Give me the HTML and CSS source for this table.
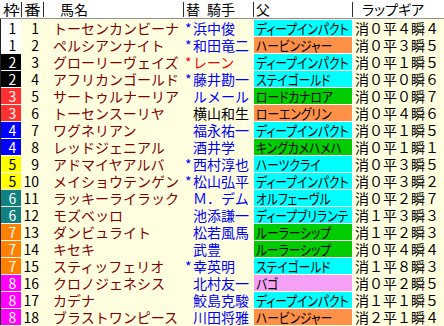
FILE: index.html
```html
<!DOCTYPE html>
<html lang="ja">
<head>
<meta charset="utf-8">
<link rel="stylesheet" href="styles.css">
</head>
<body>
<div class="table">
  <div class="head">
    <div class="h c-waku"><span class="wide">枠</span></div>
    <div class="h c-ban"><span class="wide">番</span></div>
    <div class="h c-name">馬名</div>
    <div class="h c-jockey"><span class="kae">替</span>騎手</div>
    <div class="h c-sire">父</div>
    <div class="h c-rap">ラップギア</div>
  </div>
  <div class="body">
    <div class="row"><div class="waku w1">1</div><div class="ban">1</div><div class="name">トーセンカンビーナ</div><div class="jockey"><span class="mark">*</span>浜中俊</div><div class="sire s-cyan"><span class="sq">ディープインパクト</span></div><div class="rap">消０平４瞬４</div></div>
    <div class="row"><div class="waku w1">1</div><div class="ban">2</div><div class="name">ペルシアンナイト</div><div class="jockey"><span class="mark">*</span>和田竜二</div><div class="sire s-orange"><span class="sq">ハービンジャー</span></div><div class="rap">消０平３瞬５</div></div>
    <div class="row"><div class="waku w2">2</div><div class="ban">3</div><div class="name">グローリーヴェイズ</div><div class="jockey red"><span class="mark">*</span>レーン</div><div class="sire s-cyan"><span class="sq">ディープインパクト</span></div><div class="rap">消０平１瞬５</div></div>
    <div class="row"><div class="waku w2">2</div><div class="ban">4</div><div class="name">アフリカンゴールド</div><div class="jockey"><span class="mark">*</span>藤井勘一</div><div class="sire s-cyan"><span class="sq">ステイゴールド</span></div><div class="rap">消０平０瞬６</div></div>
    <div class="row"><div class="waku w3">3</div><div class="ban">5</div><div class="name">サートゥルナーリア</div><div class="jockey"><span class="mark"></span>ルメール</div><div class="sire s-green"><span class="sq">ロードカナロア</span></div><div class="rap">消０平０瞬７</div></div>
    <div class="row"><div class="waku w3">3</div><div class="ban">6</div><div class="name">トーセンスーリヤ</div><div class="jockey black"><span class="mark"></span>横山和生</div><div class="sire s-orange"><span class="sq">ローエングリン</span></div><div class="rap">消０平４瞬６</div></div>
    <div class="row"><div class="waku w4">4</div><div class="ban">7</div><div class="name">ワグネリアン</div><div class="jockey"><span class="mark"></span>福永祐一</div><div class="sire s-cyan"><span class="sq">ディープインパクト</span></div><div class="rap">消０平１瞬５</div></div>
    <div class="row"><div class="waku w4">4</div><div class="ban">8</div><div class="name">レッドジェニアル</div><div class="jockey"><span class="mark"></span>酒井学</div><div class="sire s-green"><span class="sq">キングカメハメハ</span></div><div class="rap">消０平１瞬１</div></div>
    <div class="row"><div class="waku w5">5</div><div class="ban">9</div><div class="name">アドマイヤアルバ</div><div class="jockey"><span class="mark">*</span>西村淳也</div><div class="sire s-cyan"><span class="sq">ハーツクライ</span></div><div class="rap">消０平３瞬５</div></div>
    <div class="row"><div class="waku w5">5</div><div class="ban">10</div><div class="name">メイショウテンゲン</div><div class="jockey"><span class="mark">*</span>松山弘平</div><div class="sire s-cyan"><span class="sq">ディープインパクト</span></div><div class="rap">消０平３瞬２</div></div>
    <div class="row"><div class="waku w6">6</div><div class="ban">11</div><div class="name">ラッキーライラック</div><div class="jockey"><span class="mark"></span>Ｍ．デム</div><div class="sire s-cyan"><span class="sq">オルフェーヴル</span></div><div class="rap">消０平２瞬７</div></div>
    <div class="row"><div class="waku w6">6</div><div class="ban">12</div><div class="name">モズベッロ</div><div class="jockey"><span class="mark"></span>池添謙一</div><div class="sire s-cyan"><span class="sq">ディープブリランテ</span></div><div class="rap">消１平３瞬３</div></div>
    <div class="row"><div class="waku w7">7</div><div class="ban">13</div><div class="name">ダンビュライト</div><div class="jockey"><span class="mark"></span>松若風馬</div><div class="sire s-green"><span class="sq">ルーラーシップ</span></div><div class="rap">消１平２瞬３</div></div>
    <div class="row"><div class="waku w7">7</div><div class="ban">14</div><div class="name">キセキ</div><div class="jockey"><span class="mark"></span>武豊</div><div class="sire s-green"><span class="sq">ルーラーシップ</span></div><div class="rap">消０平４瞬４</div></div>
    <div class="row"><div class="waku w7">7</div><div class="ban">15</div><div class="name">スティッフェリオ</div><div class="jockey"><span class="mark">*</span>幸英明</div><div class="sire s-cyan"><span class="sq">ステイゴールド</span></div><div class="rap">消１平８瞬３</div></div>
    <div class="row"><div class="waku w8">8</div><div class="ban">16</div><div class="name">クロノジェネシス</div><div class="jockey"><span class="mark"></span>北村友一</div><div class="sire s-pink"><span class="sq">バゴ</span></div><div class="rap">消０平２瞬５</div></div>
    <div class="row"><div class="waku w8">8</div><div class="ban">17</div><div class="name">カデナ</div><div class="jockey"><span class="mark"></span>鮫島克駿</div><div class="sire s-cyan"><span class="sq">ディープインパクト</span></div><div class="rap">消１平１瞬５</div></div>
    <div class="row"><div class="waku w8">8</div><div class="ban">18</div><div class="name">ブラストワンピース</div><div class="jockey"><span class="mark"></span>川田将雅</div><div class="sire s-orange"><span class="sq">ハービンジャー</span></div><div class="rap">消２平１瞬４</div></div>
  </div>
</div>
</body>
</html>
```

FILE: styles.css
```css
html, body {
  margin: 0;
  padding: 0;
  background: #ffffe0;
}
body {
  width: 444px;
  height: 326px;
  overflow: hidden;
  font-family: "Noto Sans CJK JP", "Noto Sans", sans-serif;
  font-size: 14px;
  color: #000;
}
.table {
  width: 444px;
}
.head {
  display: grid;
  grid-template-columns: 22px 22px 140px 70px 99px 91px;
  height: 18px;
  background: #ffffff;
  border-bottom: 1px solid #909090;
}
.h {
  box-sizing: border-box;
  height: 15px;
  margin-top: 2px;
  line-height: 15px;
  border-right: 1px solid #303030;
  white-space: nowrap;
}
.h.c-rap { border-right: none; }
.wide {
  display: inline-block;
  transform: scaleX(1.2);
  transform-origin: left center;
}
.c-waku { padding-left: 3px; }
.c-ban { padding-left: 2px; }
.c-name { padding-left: 16px; }
.c-jockey { padding-left: 2px; }
.kae { margin-right: 7px; }
.c-sire { padding-left: 2px; }
.c-rap { padding-left: 9px; font-feature-settings: "palt"; }

.body {
  border-left: 1px solid #202020;
}
.row {
  display: grid;
  grid-template-columns: 21px 22px 140px 70px 99px 91px;
  height: 17px;
  line-height: 16px;
  white-space: nowrap;
}
.row > div {
  box-sizing: border-box;
  border-top: 1px solid #ffffe0;
}
.waku {
  text-align: center;
  padding-left: 3px;
  color: #fff;
  border-right: 1px solid #ffffe0;
  border-top-color: #ffffff !important;
}
.w1 { background: #ffffff; color: #000; }
.w2 { background: #000000; }
.w3 { background: #ff3030; }
.w4 { background: #0000ff; }
.w5 { background: #ffff00; color: #000; }
.w6 { background: #108080; }
.w7 { background: #ff8000; }
.w8 { background: #ff00ff; }
.ban {
  text-align: right;
  padding-right: 5px;
}
.name {
  color: #800000;
  padding-left: 9px;
}
.jockey {
  color: #0000ff;
  padding-left: 1px;
}
.jockey.red { color: #ff0000; }
.jockey.black { color: #000; }
.mark {
  display: inline-block;
  width: 8px;
  color: #0000ff;
}
.jockey.red .mark { color: #ff0000; }
.sire {
  padding-left: 2px;
  border-right: 1px solid #ffffff;
  border-top-color: #ffffff !important;
  font-feature-settings: "palt";
}
.sq {
  display: inline-block;
  transform: scaleX(0.84);
  transform-origin: left center;
}
.s-cyan { background: #00ffff; }
.s-orange { background: #ff9048; }
.s-green { background: #00cc00; }
.s-pink { background: #f5a0f5; }
.rap {
  padding-left: 2px;
}
```
